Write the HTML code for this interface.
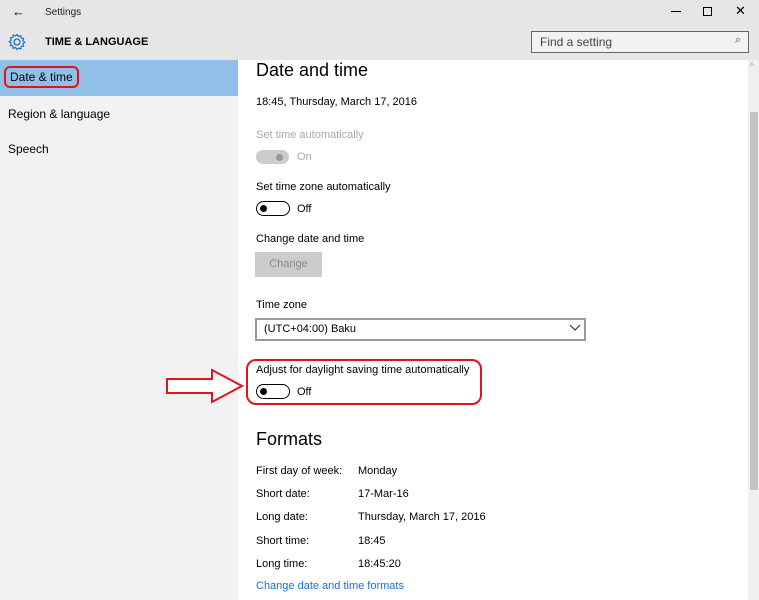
<!DOCTYPE html>
<html><head><style>
*{margin:0;padding:0;box-sizing:border-box}
body{width:759px;height:600px;overflow:hidden;font-family:"Liberation Sans",sans-serif;font-size:11px;color:#000;background:#fff;position:relative}
.a{position:absolute;white-space:nowrap}
.tg{position:absolute;width:34px;height:15px;border:1.5px solid #000;border-radius:8px}
.tg:after{content:"";position:absolute;left:3px;top:2.5px;width:7px;height:7px;border-radius:50%;background:#000}
</style></head><body>
<div class="a" style="left:0;top:0;width:759px;height:60px;background:#e6e6e6"></div>
<div class="a" style="left:0;top:60px;width:238px;height:540px;background:#f2f2f2"></div>
<div class="a" style="left:0;top:60px;width:238px;height:36px;background:#90bfe8"></div>
<div class="a" style="left:12px;top:4px;font-size:13px">&#8592;</div>
<div class="a" style="left:45px;top:7px;font-size:10px;color:#222">Settings</div>
<div class="a" style="left:671px;top:11px;width:10px;height:1px;background:#000"></div>
<div class="a" style="left:703px;top:7px;width:9px;height:9px;border:1px solid #000"></div>
<div class="a" style="left:735px;top:3px;font-size:13px">&#10005;</div>
<svg class="a" style="left:8px;top:33px" width="18" height="18" viewBox="0 0 18 18"><circle cx="9" cy="9" r="3" fill="none" stroke="#1a6fc9" stroke-width="1.3"/><path d="M9 1.5l1.5 2 2.3-.8.4 2.4 2.4.4-.8 2.3 2 1.5-2 1.5.8 2.3-2.4.4-.4 2.4-2.3-.8L9 16.5l-1.5-2-2.3.8-.4-2.4-2.4-.4.8-2.3-2-1.5 2-1.5-.8-2.3 2.4-.4.4-2.4 2.3.8z" fill="none" stroke="#1a6fc9" stroke-width="1.2"/></svg>
<div class="a" style="left:45px;top:36px;font-size:11px;font-weight:bold">TIME &amp; LANGUAGE</div>
<div class="a" style="left:531px;top:31px;width:218px;height:22px;border:1.5px solid #666;background:#f2f2f2"></div>
<div class="a" style="left:540px;top:35px;font-size:12px;color:#444">Find a setting</div>
<div class="a" style="left:735px;top:34px;font-size:11px;color:#555">&#8981;</div>
<div class="a" style="left:4px;top:66px;font-size:12px;padding:2px 4px;border:2px solid #e0141e;border-radius:6px">Date &amp; time</div>
<div class="a" style="left:8px;top:107px;font-size:12px">Region &amp; language</div>
<div class="a" style="left:8px;top:142px;font-size:12px">Speech</div>
<div class="a" style="left:748px;top:60px;width:11px;height:540px;background:#f0f0f0"></div>
<div class="a" style="left:750px;top:112px;width:8px;height:378px;background:#c2c2c2"></div>
<div class="a" style="left:750px;top:62px;font-size:8px;color:#888">^</div>
<div class="a" style="left:256px;top:60px;font-size:18px">Date and time</div>
<div class="a" style="left:256px;top:96px;font-size:11px">18:45, Thursday, March 17, 2016</div>
<div class="a" style="left:256px;top:129px;font-size:11px;color:#aaa">Set time automatically</div>
<div class="a" style="left:256px;top:150px;width:33px;height:14px;border-radius:7px;background:#ccc"></div>
<div class="a" style="left:276px;top:154px;width:7px;height:7px;border-radius:50%;background:#999"></div>
<div class="a" style="left:297px;top:151px;color:#aaa">On</div>
<div class="a" style="left:256px;top:181px">Set time zone automatically</div>
<div class="tg" style="left:256px;top:201px"></div>
<div class="a" style="left:297px;top:203px">Off</div>
<div class="a" style="left:256px;top:233px">Change date and time</div>
<div class="a" style="left:255px;top:252px;width:67px;height:25px;background:#ccc;color:#888;text-align:center;line-height:25px">Change</div>
<div class="a" style="left:256px;top:299px">Time zone</div>
<div class="a" style="left:255px;top:318px;width:331px;height:23px;border:2px solid #999"></div>
<div class="a" style="left:264px;top:323px">(UTC+04:00) Baku</div>
<svg class="a" style="left:569px;top:324px" width="12" height="8"><path d="M1 1l5 5 5-5" fill="none" stroke="#333" stroke-width="1.2"/></svg>
<div class="a" style="left:246px;top:359px;width:236px;height:46px;border:2px solid #e0141e;border-radius:10px"></div>
<div class="a" style="left:256px;top:364px">Adjust for daylight saving time automatically</div>
<div class="tg" style="left:256px;top:384px"></div>
<div class="a" style="left:297px;top:386px">Off</div>
<svg class="a" style="left:165px;top:368px" width="80" height="36"><path d="M2 11h45V2l30 16-30 16v-9H2z" fill="#fff" stroke="#e0141e" stroke-width="2"/></svg>
<div class="a" style="left:256px;top:429px;font-size:18px">Formats</div>
<div class="a" style="left:256px;top:465px">First day of week:</div><div class="a" style="left:358px;top:465px">Monday</div>
<div class="a" style="left:256px;top:488px">Short date:</div><div class="a" style="left:358px;top:488px">17-Mar-16</div>
<div class="a" style="left:256px;top:511px">Long date:</div><div class="a" style="left:358px;top:511px">Thursday, March 17, 2016</div>
<div class="a" style="left:256px;top:535px">Short time:</div><div class="a" style="left:358px;top:535px">18:45</div>
<div class="a" style="left:256px;top:558px">Long time:</div><div class="a" style="left:358px;top:558px">18:45:20</div>
<div class="a" style="left:256px;top:580px;color:#1a6fc9">Change date and time formats</div>
</body></html>
